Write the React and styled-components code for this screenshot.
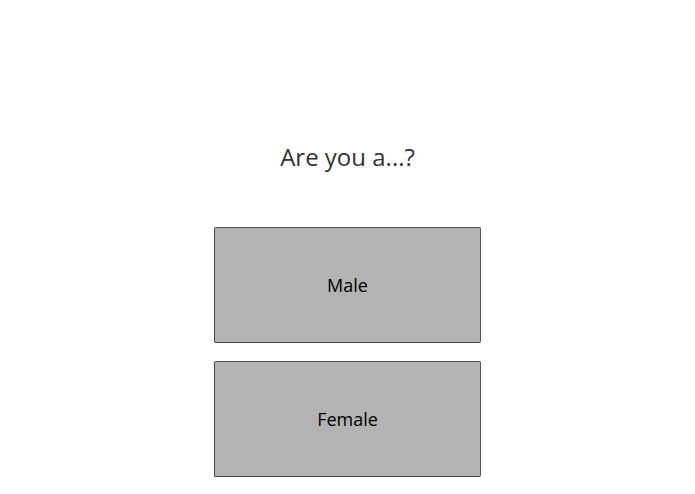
import React from 'react'
import styled, { createGlobalStyle } from 'styled-components'

const GlobalStyle = createGlobalStyle`
  html, body {
    margin: 0;
    padding: 0;
    background: #fff;
  }
  body {
    font-family: 'Open Sans', 'Noto Sans', sans-serif;
  }
`

const options = ['Male', 'Female']

const App = () => (
  <Page>
    <GlobalStyle />
    <Question>Are you a...?</Question>
    <Choices>
      {options.map(label => (
        <Choice key={label}>{label}</Choice>
      ))}
    </Choices>
  </Page>
)

const Page = styled.div`
  width: 695px;
  height: 494px;
  display: flex;
  flex-direction: column;
  align-items: center;
  padding-top: 138px;
  box-sizing: border-box;
`

const Question = styled.h1`
  margin: 0;
  font-size: 24px;
  font-weight: 400;
  line-height: 38px;
  color: #333;
`

const Choices = styled.div`
  display: flex;
  flex-direction: column;
  gap: 18px;
  margin-top: 51px;
`

const Choice = styled.button`
  width: 267px;
  height: 116px;
  box-sizing: border-box;
  background: #b3b3b3;
  border: 1px solid #555;
  border-left-color: #444;
  border-bottom-color: #444;
  border-radius: 2px;
  font-family: 'Open Sans', 'Noto Sans', sans-serif;
  font-size: 18px;
  color: #000;
  cursor: pointer;
  padding: 0;
`

export default App
